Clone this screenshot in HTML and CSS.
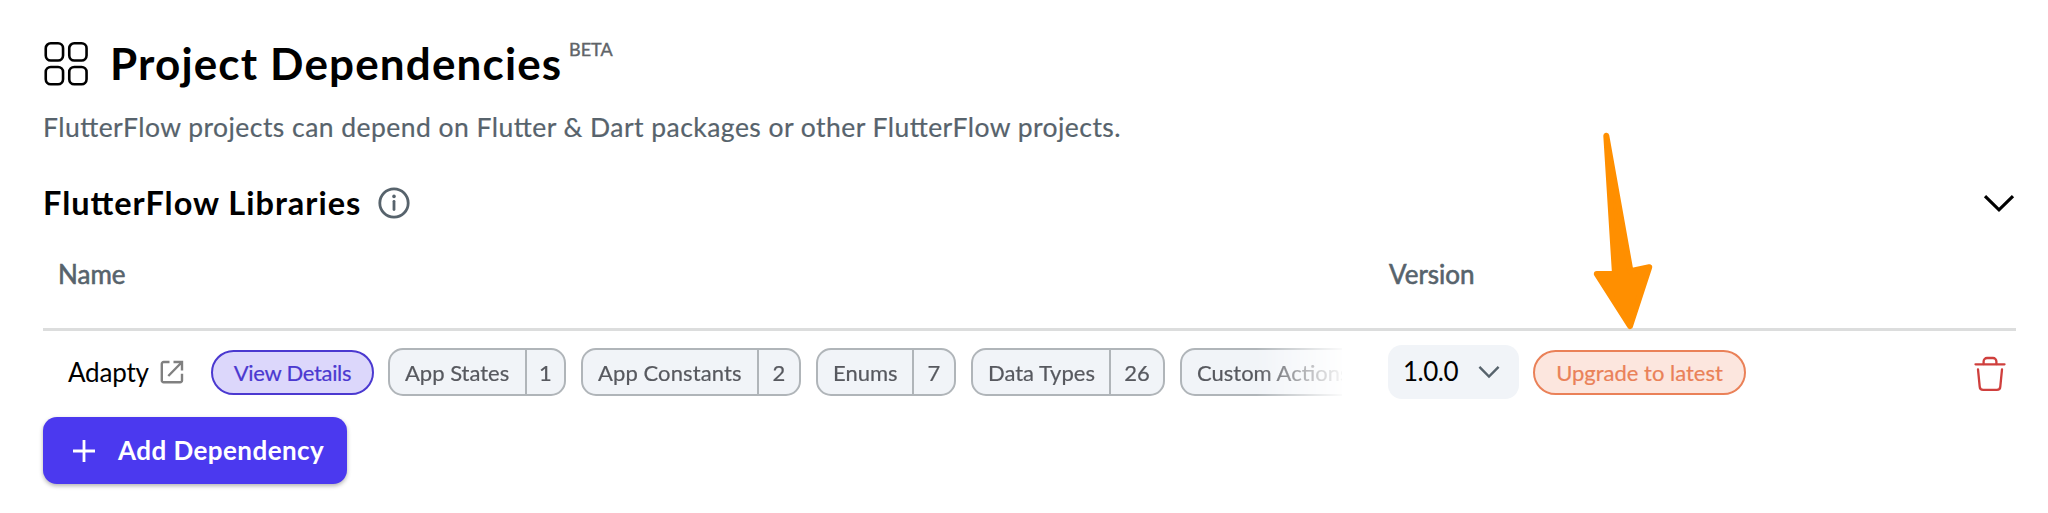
FILE: index.html
```html
<!DOCTYPE html>
<html lang="en">
<head>
<meta charset="utf-8">
<title>Project Dependencies</title>
<link rel="stylesheet" href="styles.css">
</head>
<body>
<main class="page">
  <header class="title-row">
    <svg class="grid-icon" width="46" height="46" viewBox="0 0 46 46" fill="none" stroke="#000" stroke-width="2.6">
      <rect x="2.75" y="2.25" width="17.3" height="17.3" rx="5"/>
      <rect x="26.25" y="2.25" width="17.3" height="17.3" rx="5"/>
      <rect x="2.75" y="26" width="17.3" height="17.3" rx="5"/>
      <rect x="26.25" y="26" width="17.3" height="17.3" rx="5"/>
    </svg>
    <h1 class="title">Project Dependencies</h1>
    <span class="beta">BETA</span>
  </header>
  <p class="subtitle">FlutterFlow projects can depend on Flutter &amp; Dart packages or other FlutterFlow projects.</p>
  <div class="section-row">
    <h2 class="section-title">FlutterFlow Libraries</h2>
    <svg class="info-icon" width="34" height="34" viewBox="0 0 34 34" fill="none" stroke="#57636c" stroke-width="2.8">
      <circle cx="17" cy="17" r="14.2"/>
      <path d="M17 15.3v8.2" stroke-linecap="round"/>
      <circle cx="17" cy="10.4" r="1.8" fill="#57636c" stroke="none"/>
    </svg>
    <svg class="section-chevron" width="32" height="20" viewBox="0 0 32 20" fill="none" stroke="#000" stroke-width="3.2">
      <path d="M2 2.2 16 15.8 30 2.2"/>
    </svg>
  </div>
  <div class="table-head">
    <span class="col-name">Name</span>
    <span class="col-version">Version</span>
  </div>
  <div class="table-row">
    <div class="name-cell">
      <span class="lib-name">Adapty</span>
      <svg class="link-icon" width="24" height="24" viewBox="0 0 24 24" fill="none" stroke="#808080" stroke-width="2.4">
        <path d="M9.5 2H3.6A1.8 1.8 0 0 0 1.8 3.8v16.6a1.8 1.8 0 0 0 1.8 1.8h16.6a1.8 1.8 0 0 0 1.8-1.8v-6.6"/>
        <path d="M13.5 2H22v8.5M22 2 8.3 16"/>
      </svg>
      <span class="pill pill-details">View Details</span>
      <div class="chips">
        <span class="chip chip-states"><span class="chip-label">App States</span><span class="chip-count">1</span></span>
        <span class="chip chip-constants"><span class="chip-label">App Constants</span><span class="chip-count">2</span></span>
        <span class="chip chip-enums"><span class="chip-label">Enums</span><span class="chip-count">7</span></span>
        <span class="chip chip-types"><span class="chip-label">Data Types</span><span class="chip-count">26</span></span>
        <span class="chip chip-actions"><span class="chip-label">Custom Actions</span></span>
      </div>
    </div>
    <div class="version-select">
      <span class="version-value">1.0.0</span>
      <svg width="22" height="14" viewBox="0 0 22 14" fill="none" stroke="#57636c" stroke-width="2.4">
        <path d="M1.4 1.8 11 11.6 20.6 1.8"/>
      </svg>
    </div>
    <span class="pill pill-upgrade">Upgrade to latest</span>
    <svg class="trash-icon" width="32" height="36" viewBox="0 0 32 36" fill="none" stroke="#cf3f3d" stroke-width="2.3" stroke-linecap="round">
      <path d="M1.5 8.3h29"/>
      <path d="M9.6 8V5.4A3.4 3.4 0 0 1 13 2h6a3.4 3.4 0 0 1 3.4 3.4V8"/>
      <path d="M4 13.3 5.7 30.6A3.5 3.5 0 0 0 9.2 33.9h13.6a3.5 3.5 0 0 0 3.5-3.3L28 13.3"/>
    </svg>
  </div>
  <button class="add-button" type="button">
    <svg width="24" height="24" viewBox="0 0 24 24" fill="none" stroke="#fff" stroke-width="2.8">
      <path d="M12 1v22M1 12h22"/>
    </svg>
    <span class="add-label">Add Dependency</span>
  </button>
  <svg class="pointer-arrow" width="70" height="206" viewBox="0 0 70 206">
    <path d="M19.3 7.8 28 146H9.8L43 198 62.2 139.2 43.5 143.3Z" fill="#ff8f00" stroke="#ff8f00" stroke-width="6" stroke-linejoin="round"/>
  </svg>
</main>
</body>
</html>
```
FILE: styles.css
```css
* {
  box-sizing: border-box;
}

body {
  margin: 0;
  background: #fff;
  color: #000;
  font-family: Lato, "Open Sans", sans-serif;
  font-feature-settings: "liga" 1;
}

.page {
  position: relative;
  width: 2048px;
  height: 513px;
  padding: 32px 32px 0 43px;
  overflow: hidden;
}

.title-row {
  display: flex;
  align-items: center;
  height: 62px;
}

.grid-icon {
  margin-top: 1px;
}

.title {
  margin: 0 0 0 21px;
  width: 456px;
  font-size: 44px;
  font-weight: 700;
  line-height: 54px;
  letter-spacing: 1.15px;
  white-space: nowrap;
}

.beta {
  align-self: flex-start;
  margin: 6px 0 0 3px;
  color: #606468;
  font-size: 18px;
  line-height: 22px;
  -webkit-text-stroke: 0.4px;
}

.subtitle {
  margin: 13px 0 0;
  color: #57636c;
  font-size: 26.5px;
  line-height: 40px;
  letter-spacing: 0.46px;
  white-space: nowrap;
  -webkit-text-stroke: 0.2px;
}

.section-row {
  display: flex;
  align-items: center;
  height: 50px;
  margin-top: 29px;
}

.section-title {
  margin: 3px 0 0;
  width: 334px;
  font-size: 32.5px;
  font-weight: 700;
  line-height: 44px;
  letter-spacing: 1px;
  white-space: nowrap;
}

.info-icon {
  margin-top: 3px;
}

.section-chevron {
  margin: 6px 1px 0 auto;
}

.table-head {
  display: flex;
  width: 1973px;
  height: 105px;
  padding: 32px 0 0 15px;
  border-bottom: 3px solid #dcdddd;
  color: #57636c;
  font-size: 26px;
  line-height: 32px;
  -webkit-text-stroke: 0.6px;
}

.col-name {
  width: 1331px;
}

.table-row {
  display: flex;
  align-items: center;
  width: 1973px;
  height: 82px;
}

.name-cell {
  display: flex;
  align-items: center;
  width: 1299px;
  padding-left: 25px;
}

.lib-name {
  width: 92px;
  font-size: 26px;
  line-height: 34px;
  letter-spacing: -0.2px;
}

.pill {
  display: flex;
  align-items: center;
  justify-content: center;
  height: 45px;
  border: 2px solid;
  border-radius: 23px;
  font-size: 22px;
  white-space: nowrap;
  -webkit-text-stroke: 0.2px;
}

.pill-details {
  width: 163px;
  margin-left: 27px;
  background: #dcd7fb;
  color: #4b39d0;
  letter-spacing: -0.3px;
}

.chips {
  display: flex;
  gap: 15px;
  width: 954px;
  margin-left: 14px;
  overflow: hidden;
  -webkit-mask-image: linear-gradient(to right, #000 868px, rgba(0, 0, 0, 0.3) 930px, transparent 960px);
  mask-image: linear-gradient(to right, #000 868px, rgba(0, 0, 0, 0.3) 930px, transparent 960px);
}

.chip {
  display: flex;
  flex: none;
  height: 48px;
  border: 2px solid #b0b5b9;
  border-radius: 15px;
  background: #f1f4f8;
  color: #57595f;
  font-size: 22px;
  line-height: 45px;
  white-space: nowrap;
  -webkit-text-stroke: 0.2px;
}

.chip-label {
  flex: 1;
  padding-left: 15px;
}

.chip-count {
  width: 42px;
  border-left: 2px solid #b0b5b9;
  text-align: center;
}

.chip-states {
  width: 178px;
}

.chip-states .chip-count {
  width: 39px;
}

.chip-constants {
  width: 220px;
}

.chip-constants .chip-label {
  letter-spacing: 0.1px;
}

.chip-enums {
  width: 140px;
}

.chip-types {
  width: 194px;
}

.chip-types .chip-count {
  width: 54px;
}

.chip-actions {
  width: 220px;
}

.version-select {
  display: flex;
  align-items: center;
  justify-content: space-between;
  width: 131px;
  height: 54px;
  margin-left: 46px;
  padding: 0 19px 0 15px;
  border-radius: 14px;
  background: #f1f4f8;
  font-size: 26px;
}

.version-value {
  margin-top: -2px;
  letter-spacing: -0.5px;
}

.pill-upgrade {
  width: 213px;
  margin-left: 14px;
  background: #fce6de;
  color: #ea8158;
}

.trash-icon {
  margin: 4px 10px 0 auto;
}

.add-button {
  display: flex;
  align-items: center;
  width: 304px;
  height: 67px;
  margin-top: 4px;
  padding: 0 0 0 29px;
  border: 0;
  border-radius: 14px;
  background: #4b39ef;
  box-shadow: 0 2px 4px rgba(0, 0, 0, 0.3);
  color: #fff;
  font: 700 26px Lato, "Open Sans", sans-serif;
}

.add-label {
  margin: -2px 0 0 22px;
  letter-spacing: 0.45px;
  white-space: nowrap;
}

.pointer-arrow {
  position: absolute;
  left: 1587px;
  top: 128px;
}
```
